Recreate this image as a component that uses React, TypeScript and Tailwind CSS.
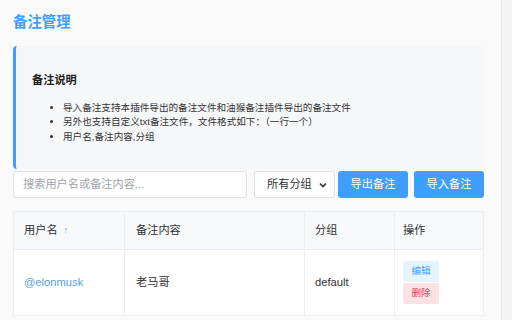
import React from "react";

const font = { fontFamily: '"Liberation Sans", "Noto Sans CJK SC", sans-serif' };

export default function App() {
  return (
    <div className="flex h-[320px] w-[512px] overflow-hidden bg-[#fafafa] text-[#303133]" style={font}>
      <div className="flex-1 pl-[13px] pr-[17px] pt-[12px]">
        <h1 className="h-[20px] text-[14.4px] font-bold leading-[20px] text-[#409eff]">备注管理</h1>

        <div className="mt-[14px] h-[123px] rounded-[4px] border-l-[3px] border-[#409eff] bg-[#f6f7f9] pl-[16px] pt-[26px]">
          <div className="h-[16px] text-[11.2px] font-bold leading-[16px] text-[#222]">备注说明</div>
          <ul className="mt-[12.75px] list-disc pl-[31px] text-[9.6px] leading-[14.5px] text-[#333]">
            <li>导入备注支持本插件导出的备注文件和油猴备注插件导出的备注文件</li>
            <li>另外也支持自定义txt备注文件，文件格式如下：（一行一个）</li>
            <li>用户名,备注内容,分组</li>
          </ul>
        </div>

        <div className="mt-[2px] flex h-[27px] items-stretch">
          <div className="flex w-[234px] items-center rounded-[3px] border border-[#dcdfe6] bg-white pl-[9px] text-[11.2px] text-[#a0a4ab]">
            搜索用户名或备注内容...
          </div>
          <div className="ml-[7px] flex w-[81px] items-center justify-between rounded-[3px] border border-[#dcdfe6] bg-white pl-[12px] pr-[6px] text-[11.2px] text-[#303133]">
            <span>所有分组</span>
            <svg width="8" height="6" viewBox="0 0 8 6" className="mr-[1px]">
              <path d="M1 1.5 L4 4.5 L7 1.5" fill="none" stroke="#333" strokeWidth="1.6" />
            </svg>
          </div>
          <button className="ml-[3px] w-[70px] rounded-[3px] bg-[#409eff] text-[11.2px] text-white">导出备注</button>
          <button className="ml-[6px] w-[70px] rounded-[3px] bg-[#409eff] text-[11.2px] text-white">导入备注</button>
        </div>

        <div className="mt-[13px] border border-[#ebeef5] bg-white text-[11.2px]">
          <div className="grid h-[37px] grid-cols-[111px_180px_90px_1fr] bg-[#f8f9fb]">
            <div className="flex items-center border-r border-[#ebeef5] pl-[10px]">
              用户名<span className="ml-[6px] text-[9px] text-[#409eff]">↑</span>
            </div>
            <div className="flex items-center border-r border-[#ebeef5] pl-[11px]">备注内容</div>
            <div className="flex items-center border-r border-[#ebeef5] pl-[10px]">分组</div>
            <div className="flex items-center pl-[8px]">操作</div>
          </div>
          <div className="grid h-[66px] grid-cols-[111px_180px_90px_1fr] border-t border-[#ebeef5]">
            <div className="flex items-center border-r border-[#ebeef5] pl-[10px] text-[#5a9fe0]">@elonmusk</div>
            <div className="flex items-center border-r border-[#ebeef5] pl-[11px]">老马哥</div>
            <div className="flex items-center border-r border-[#ebeef5] pl-[10px]">default</div>
            <div className="flex flex-col justify-center gap-[1px] pl-[8px]">
              <span className="flex h-[21px] w-[36px] items-center justify-center rounded-[2px] bg-[#e5f4fa] text-[9.6px] text-[#409eff]">编辑</span>
              <span className="flex h-[21px] w-[36px] items-center justify-center rounded-[2px] bg-[#fbe3e5] text-[9.6px] text-[#e0455a]">删除</span>
            </div>
          </div>
        </div>
      </div>
      <div className="w-[11px] border-l border-[#e6e6e6] bg-[#f3f3f3]" />
    </div>
  );
}
